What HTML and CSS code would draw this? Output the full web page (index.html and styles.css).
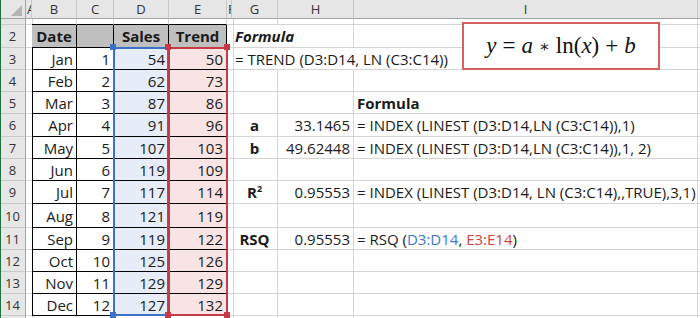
FILE: index.html
```html
<!DOCTYPE html>
<html lang="en">
<head>
  <meta charset="UTF-8">
  <title>TREND with LN</title>
  <link rel="stylesheet" href="styles.css">
</head>
<body>
  <div class="sheet">
    <!-- column headers -->
    <div class="ch corner"><svg width="25" height="18"><polygon points="22,5 22,16 11,16" fill="#b4b4b4"/></svg></div>
    <div class="ch narrow">A</div>
    <div class="ch">B</div>
    <div class="ch">C</div>
    <div class="ch">D</div>
    <div class="ch">E</div>
    <div class="ch narrow">F</div>
    <div class="ch">G</div>
    <div class="ch">H</div>
    <div class="ch">I</div>
    <div class="ch"></div>

    <!-- row 1 -->
    <div class="rh"></div>
    <div class="c"></div>
    <div class="c bt"></div><div class="c bt"></div><div class="c bt"></div><div class="c bt"></div>
    <div class="c"></div><div class="c"></div><div class="c"></div><div class="c"></div><div class="c"></div>

    <!-- row 2 -->
    <div class="rh">2</div>
    <div class="c bl"></div>
    <div class="c t th">Date</div>
    <div class="c t th"></div>
    <div class="c t th">Sales</div>
    <div class="c t th">Trend</div>
    <div class="c"></div>
    <div class="c open bi">Formula</div>
    <div class="c"></div>
    <div class="c"></div>
    <div class="c"></div>

    <!-- row 3 -->
    <div class="rh">3</div>
    <div class="c bl"></div>
    <div class="c t r">Jan</div><div class="c t r">1</div>
    <div class="c t r sel-d">54</div><div class="c t r sel-e">50</div>
    <div class="c"></div>
    <div class="c open">= TREND (D3:D14, LN (C3:C14))</div>
    <div class="c open"></div>
    <div class="c"></div><div class="c"></div>

    <!-- row 4 -->
    <div class="rh">4</div>
    <div class="c bl"></div>
    <div class="c t r">Feb</div><div class="c t r">2</div>
    <div class="c t r sel-d">62</div><div class="c t r sel-e">73</div>
    <div class="c"></div><div class="c"></div><div class="c"></div><div class="c"></div><div class="c"></div>

    <!-- row 5 -->
    <div class="rh">5</div>
    <div class="c bl"></div>
    <div class="c t r">Mar</div><div class="c t r">3</div>
    <div class="c t r sel-d">87</div><div class="c t r sel-e">86</div>
    <div class="c"></div><div class="c"></div><div class="c"></div>
    <div class="c b">Formula</div>
    <div class="c"></div>

    <!-- row 6 -->
    <div class="rh">6</div>
    <div class="c bl"></div>
    <div class="c t r">Apr</div><div class="c t r">4</div>
    <div class="c t r sel-d">91</div><div class="c t r sel-e">96</div>
    <div class="c"></div>
    <div class="c b mid">a</div>
    <div class="c r">33.1465</div>
    <div class="c">= INDEX (LINEST (D3:D14,LN (C3:C14)),1)</div>
    <div class="c"></div>

    <!-- row 7 -->
    <div class="rh">7</div>
    <div class="c bl"></div>
    <div class="c t r">May</div><div class="c t r">5</div>
    <div class="c t r sel-d">107</div><div class="c t r sel-e">103</div>
    <div class="c"></div>
    <div class="c b mid">b</div>
    <div class="c r">49.62448</div>
    <div class="c">= INDEX (LINEST (D3:D14,LN (C3:C14)),1, 2)</div>
    <div class="c"></div>

    <!-- row 8 -->
    <div class="rh">8</div>
    <div class="c bl"></div>
    <div class="c t r">Jun</div><div class="c t r">6</div>
    <div class="c t r sel-d">119</div><div class="c t r sel-e">109</div>
    <div class="c"></div><div class="c"></div><div class="c"></div><div class="c"></div><div class="c"></div>

    <!-- row 9 -->
    <div class="rh">9</div>
    <div class="c bl"></div>
    <div class="c t r">Jul</div><div class="c t r">7</div>
    <div class="c t r sel-d">117</div><div class="c t r sel-e">114</div>
    <div class="c"></div>
    <div class="c b mid"><span>R<sup>2</sup></span></div>
    <div class="c r">0.95553</div>
    <div class="c">= INDEX (LINEST (D3:D14, LN (C3:C14),,TRUE),3,1)</div>
    <div class="c"></div>

    <!-- row 10 -->
    <div class="rh">10</div>
    <div class="c bl"></div>
    <div class="c t r">Aug</div><div class="c t r">8</div>
    <div class="c t r sel-d">121</div><div class="c t r sel-e">119</div>
    <div class="c"></div><div class="c"></div><div class="c"></div><div class="c"></div><div class="c"></div>

    <!-- row 11 -->
    <div class="rh">11</div>
    <div class="c bl"></div>
    <div class="c t r">Sep</div><div class="c t r">9</div>
    <div class="c t r sel-d">119</div><div class="c t r sel-e">122</div>
    <div class="c"></div>
    <div class="c b mid">RSQ</div>
    <div class="c r">0.95553</div>
    <div class="c"><span>= RSQ (<span class="ref-d">D3:D14</span>, <span class="ref-e">E3:E14</span>)</span></div>
    <div class="c"></div>

    <!-- row 12 -->
    <div class="rh">12</div>
    <div class="c bl"></div>
    <div class="c t r">Oct</div><div class="c t r">10</div>
    <div class="c t r sel-d">125</div><div class="c t r sel-e">126</div>
    <div class="c"></div><div class="c"></div><div class="c"></div><div class="c"></div><div class="c"></div>

    <!-- row 13 -->
    <div class="rh">13</div>
    <div class="c bl"></div>
    <div class="c t r">Nov</div><div class="c t r">11</div>
    <div class="c t r sel-d">129</div><div class="c t r sel-e">129</div>
    <div class="c"></div><div class="c"></div><div class="c"></div><div class="c"></div><div class="c"></div>

    <!-- row 14 -->
    <div class="rh">14</div>
    <div class="c bl"></div>
    <div class="c t r">Dec</div><div class="c t r">12</div>
    <div class="c t r sel-d">127</div><div class="c t r sel-e">132</div>
    <div class="c"></div><div class="c"></div><div class="c"></div><div class="c"></div><div class="c"></div>

    <!-- row 15, only its top edge is in view -->
    <div class="rh"></div>
    <div class="c"></div><div class="c"></div><div class="c"></div><div class="c"></div><div class="c"></div>
    <div class="c"></div><div class="c"></div><div class="c"></div><div class="c"></div><div class="c"></div>

    <!-- range highlights and the equation box sit over the grid -->
    <div class="range range-d">
      <span class="h tl"></span><span class="h tr"></span><span class="h bl-h"></span><span class="h br"></span>
    </div>
    <div class="range range-e">
      <span class="h tl"></span><span class="h tr"></span><span class="h bl-h"></span><span class="h br"></span>
    </div>
    <div class="eq">
      <span class="mi">y</span><span class="op">=</span><span class="mi">a</span><span class="op ast">∗</span>ln(<span class="mi">x</span>)<span class="op">+</span><span class="mi">b</span>
    </div>
  </div>
</body>
</html>
```

FILE: styles.css
```css
* {
  box-sizing: border-box;
}
body {
  margin: 0;
  background: #fff;
  font-family: "Open Sans", "Liberation Sans", sans-serif;
  font-size: 15px;
  color: #1a1a1a;
  overflow: hidden;
}
.sheet {
  position: relative;
  width: 700px;
  height: 318px;
  display: grid;
  grid-template-columns: 26px 6px 45px 37px 55px 58px 5px 46px 76px 344px 1fr;
  grid-template-rows: 19px 6px 23px 22px 22px 22px 23px 22px 22px 23px 24px 22px 22px 22px 22px 22px;
  overflow: hidden;
}
.sheet::before {
  content: "";
  position: absolute;
  left: 0;
  top: 0;
  bottom: 0;
  width: 1px;
  background: #217346;
  z-index: 5;
}

/* headers */
.ch {
  background: #e6e6e6;
  border-right: 1px solid #c8c8c8;
  border-bottom: 1px solid #a3a3a3;
  display: flex;
  align-items: center;
  justify-content: center;
  font-size: 13px;
  color: #333;
  line-height: 18px;
  overflow: hidden;
}
.ch.corner {
  border-right-color: #a3a3a3;
  justify-content: flex-start;
}
.ch.narrow {
  justify-content: flex-start;
  padding-left: 1px;
}
.rh {
  background: #e6e6e6;
  border-right: 1px solid #a3a3a3;
  border-bottom: 1px solid #c8c8c8;
  display: flex;
  align-items: center;
  justify-content: center;
  font-size: 13px;
  color: #333;
  overflow: hidden;
}

/* cells */
.c {
  border-right: 1px solid #d4d4d4;
  border-bottom: 1px solid #d4d4d4;
  padding: 0 3px;
  display: flex;
  align-items: center;
  white-space: nowrap;
  line-height: 20px;
  min-width: 0;
}
.c.r {
  justify-content: flex-end;
}
.c.mid {
  justify-content: center;
}
.c.open {
  border-right-color: transparent;
}
.c.b {
  font-weight: bold;
}
.c.bi {
  font-weight: bold;
  font-style: italic;
}
.c.t {
  border-right-color: #000;
  border-bottom-color: #000;
}
.c.bt {
  border-bottom-color: #000;
}
.c.bl {
  border-right-color: #000;
}
.c.th {
  background: #bfbfbf;
  font-weight: bold;
  justify-content: center;
}
.sel-d {
  background: #e6edf8;
}
.sel-e {
  background: #f8e4e5;
}
sup {
  font-size: 9px;
  line-height: 0;
  vertical-align: 6px;
}
.ref-d {
  color: #3b78d6;
}
.ref-e {
  color: #cf4040;
}

/* range outlines */
.range {
  position: absolute;
  top: 47px;
  height: 269px;
  border: 2px solid;
}
.range-d {
  left: 113px;
  width: 56px;
  border-color: #3e70c8;
}
.range-e {
  left: 168px;
  width: 60px;
  border-color: #c53a46;
}
.h {
  position: absolute;
  width: 6px;
  height: 6px;
}
.range-d .h {
  background: #3e70c8;
}
.range-e .h {
  background: #c53a46;
}
.tl { left: -5px; top: -5px; }
.tr { right: -4px; top: -5px; }
.bl-h { left: -5px; bottom: -4px; }
.br { right: -4px; bottom: -4px; }

/* equation text box */
.eq {
  position: absolute;
  left: 462px;
  top: 22px;
  width: 198px;
  height: 48px;
  border: 2px solid #d65f5f;
  background: #fff;
  display: flex;
  align-items: center;
  justify-content: center;
  font-family: "Liberation Serif", "DejaVu Serif", serif;
  font-size: 23px;
  color: #111;
  z-index: 2;
}
.eq .mi {
  font-style: italic;
}
.eq .op {
  margin: 0 6px;
}
.eq .ast {
  font-family: "DejaVu Serif", serif;
  font-size: 16px;
}
```
